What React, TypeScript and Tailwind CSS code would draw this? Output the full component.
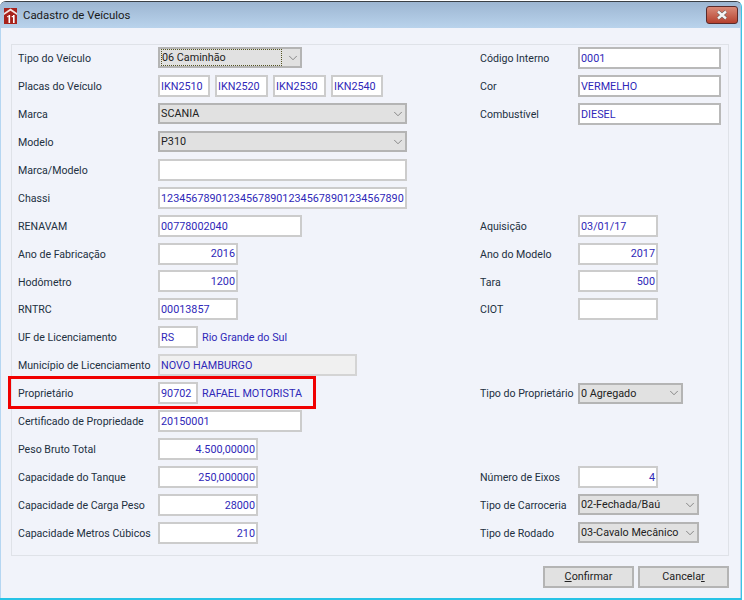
import React from 'react';
import { ChevronDown } from 'lucide-react';

const Logo = () => (
  <svg width="13" height="16" viewBox="0 0 13 16" className="shrink-0">
    <rect width="13" height="16" fill="#a8231c" />
    <path d="M0 5 L6.5 0.5 L13 5 L13 7 L6.5 2.8 L0 7 Z" fill="#f6e3df" />
    <rect x="4.5" y="7" width="1.6" height="8" fill="#fff" />
    <rect x="3.2" y="8" width="1.4" height="1.2" fill="#fff" />
    <rect x="9" y="7" width="1.6" height="8" fill="#fff" />
    <rect x="7.7" y="8" width="1.4" height="1.2" fill="#fff" />
  </svg>
);

const Label = ({ children, className = '' }: { children: React.ReactNode; className?: string }) => (
  <span className={`text-[#22303f] text-[10.6px] pt-[2px] whitespace-nowrap ${className}`}>{children}</span>
);

const Input = ({ value = '', w, right, dark }: { value?: string; w: string; right?: boolean; dark?: boolean }) => (
  <div
    className={`${w} h-[22px] shrink-0 bg-white border-2 ${dark ? 'border-[#b9b9b9]' : 'border-[#cccccc]'} flex items-center px-[1px] pt-[2px] text-[#2f28b8] whitespace-nowrap overflow-hidden ${right ? 'justify-end' : ''}`}
  >
    {value}
  </div>
);

const Select = ({ value, w, focus }: { value: string; w: string; focus?: boolean }) => (
  <div className={`${w} h-[21px] shrink-0 bg-[#e1e1e1] border-2 border-[#b4b4b4] flex items-center justify-between pl-[1px] text-[#222]`}>
    <span className={`whitespace-nowrap leading-[14px] pt-[1px] ${focus ? 'border border-dotted border-[#555522] w-[121px]' : ''}`}>{value}</span>
    <ChevronDown size={14} strokeWidth={1.25} className="text-[#666] shrink-0" />
  </div>
);

const Row = ({ label, left, rlabel, right }: { label: string; left: React.ReactNode; rlabel?: string; right?: React.ReactNode }) => (
  <div className="flex items-center h-[27.94px]">
    <div className="w-[462px] flex items-center shrink-0">
      <Label className="w-[140px] shrink-0">{label}</Label>
      {left}
    </div>
    {rlabel && <Label className="w-[98px] shrink-0">{rlabel}</Label>}
    {right}
  </div>
);

const Btn = ({ children }: { children: React.ReactNode }) => (
  <button className="w-[91px] h-[22px] bg-[#e1e1e1] border-2 border-[#b4b4b4] text-[#222] flex items-center justify-center">
    {children}
  </button>
);

export default function App() {
  return (
    <div className="w-[744px] h-[600px] bg-white overflow-hidden text-[10.8px]" style={{ fontFamily: 'Roboto, "Liberation Sans", sans-serif' }}>
      <div className="w-[742px] h-[599px] mt-[1px] rounded-t-[6px] border-t border-r border-[#3a3f45] border-r-[#39c4e4] bg-[#b5d6f2] flex flex-col">
        {/* Title bar */}
        <div className="h-[26px] shrink-0 bg-gradient-to-b from-[#9db6d2] to-[#b9d3ec] flex items-start justify-between pl-[4px] pr-[3px] rounded-t-[5px]">
          <div className="flex items-center gap-[6px] mt-[5px]">
            <Logo />
            <span className="text-[#1a1a1a] text-[11.4px]">Cadastro de Veículos</span>
          </div>
          <div className="w-[32px] h-[18px] mt-[4px] rounded-[3px] border border-[#5a2a2a] bg-gradient-to-b from-[#d98a78] to-[#b5402e] flex items-center justify-center">
            <svg width="14" height="10" viewBox="0 0 14 10">
              <path d="M3 1.5 L11 8.5 M11 1.5 L3 8.5" stroke="#555" strokeWidth="3.6" />
              <path d="M3 1.5 L11 8.5 M11 1.5 L3 8.5" stroke="#f5f5f5" strokeWidth="2.4" />
            </svg>
          </div>
        </div>

        {/* Dialog body */}
        <div className="mx-[1px] flex-1 bg-[#f1f3fa] flex flex-col pl-[10px] pr-[11px] pt-[16px]">
          <div className="border border-[#dfe2e8] h-[512px] pl-[6px]">
            <div className="-mt-[1px]">
              <Row label="Tipo do Veículo" left={<Select value="06 Caminhão" w="w-[144px]" focus />} rlabel="Código Interno" right={<Input value="0001" w="w-[143px]" dark />} />
              <Row
                label="Placas do Veículo"
                left={
                  <div className="flex gap-[5px]">
                    <Input value="IKN2510" w="w-[52px]" />
                    <Input value="IKN2520" w="w-[53px]" />
                    <Input value="IKN2530" w="w-[53px]" />
                    <Input value="IKN2540" w="w-[52px]" />
                  </div>
                }
                rlabel="Cor"
                right={<Input value="VERMELHO" w="w-[143px]" dark />}
              />
              <Row label="Marca" left={<Select value="SCANIA" w="w-[249px]" />} rlabel="Combustível" right={<Input value="DIESEL" w="w-[143px]" dark />} />
              <Row label="Modelo" left={<Select value="P310" w="w-[249px]" />} />
              <Row label="Marca/Modelo" left={<Input w="w-[249px]" />} />
              <Row label="Chassi" left={<Input value="1234567890123456789012345678901234567890" w="w-[249px]" />} />
              <Row label="RENAVAM" left={<Input value="00778002040" w="w-[144px]" />} rlabel="Aquisição" right={<Input value="03/01/17" w="w-[80px]" />} />
              <Row label="Ano de Fabricação" left={<Input value="2016" w="w-[80px]" right />} rlabel="Ano do Modelo" right={<Input value="2017" w="w-[80px]" right />} />
              <Row label="Hodômetro" left={<Input value="1200" w="w-[80px]" right />} rlabel="Tara" right={<Input value="500" w="w-[80px]" right />} />
              <Row label="RNTRC" left={<Input value="00013857" w="w-[80px]" />} rlabel="CIOT" right={<Input w="w-[80px]" />} />
              <Row
                label="UF de Licenciamento"
                left={
                  <div className="flex items-center gap-[4px]">
                    <Input value="RS" w="w-[40px]" />
                    <span className="text-[#2f28b8] pt-[2px]">Rio Grande do Sul</span>
                  </div>
                }
              />
              <Row
                label="Município de Licenciamento"
                left={
                  <div className="w-[199px] h-[22px] bg-[#f0f0f0] border-2 border-[#d4d4d4] flex items-center px-[1px] pt-[2px] text-[#2f28b8]">NOVO HAMBURGO</div>
                }
              />
              <div className="relative">
                <div className="absolute left-[-10px] top-[-3px] w-[308px] h-[33px] border-[3px] border-[#f00000]" />
                <Row
                  label="Proprietário"
                  left={
                    <div className="flex items-center gap-[4px]">
                      <Input value="90702" w="w-[40px]" />
                      <span className="text-[#2f28b8] pt-[2px]">RAFAEL MOTORISTA</span>
                    </div>
                  }
                  rlabel="Tipo do Proprietário"
                  right={<Select value="0 Agregado" w="w-[105px]" />}
                />
              </div>
              <Row label="Certificado de Propriedade" left={<Input value="20150001" w="w-[144px]" />} />
              <Row label="Peso Bruto Total" left={<Input value="4.500,00000" w="w-[100px]" right />} />
              <Row label="Capacidade do Tanque" left={<Input value="250,000000" w="w-[100px]" right />} rlabel="Número de Eixos" right={<Input value="4" w="w-[80px]" right />} />
              <Row label="Capacidade de Carga Peso" left={<Input value="28000" w="w-[100px]" right />} rlabel="Tipo de Carroceria" right={<Select value="02-Fechada/Baú" w="w-[121px]" />} />
              <Row label="Capacidade Metros Cúbicos" left={<Input value="210" w="w-[100px]" right />} rlabel="Tipo de Rodado" right={<Select value="03-Cavalo Mecânico" w="w-[121px]" />} />
            </div>
          </div>
          <div className="flex justify-end gap-[4px] mt-[10px]">
            <Btn><span><u>C</u>onfirmar</span></Btn>
            <Btn><span>Cancela<u>r</u></span></Btn>
          </div>
        </div>
        {/* Bottom edge */}
        <div className="h-[2px] shrink-0 bg-[#27c3e6]" />
      </div>
      <div className="h-[1px] bg-[#1a2a30]" />
    </div>
  );
}
